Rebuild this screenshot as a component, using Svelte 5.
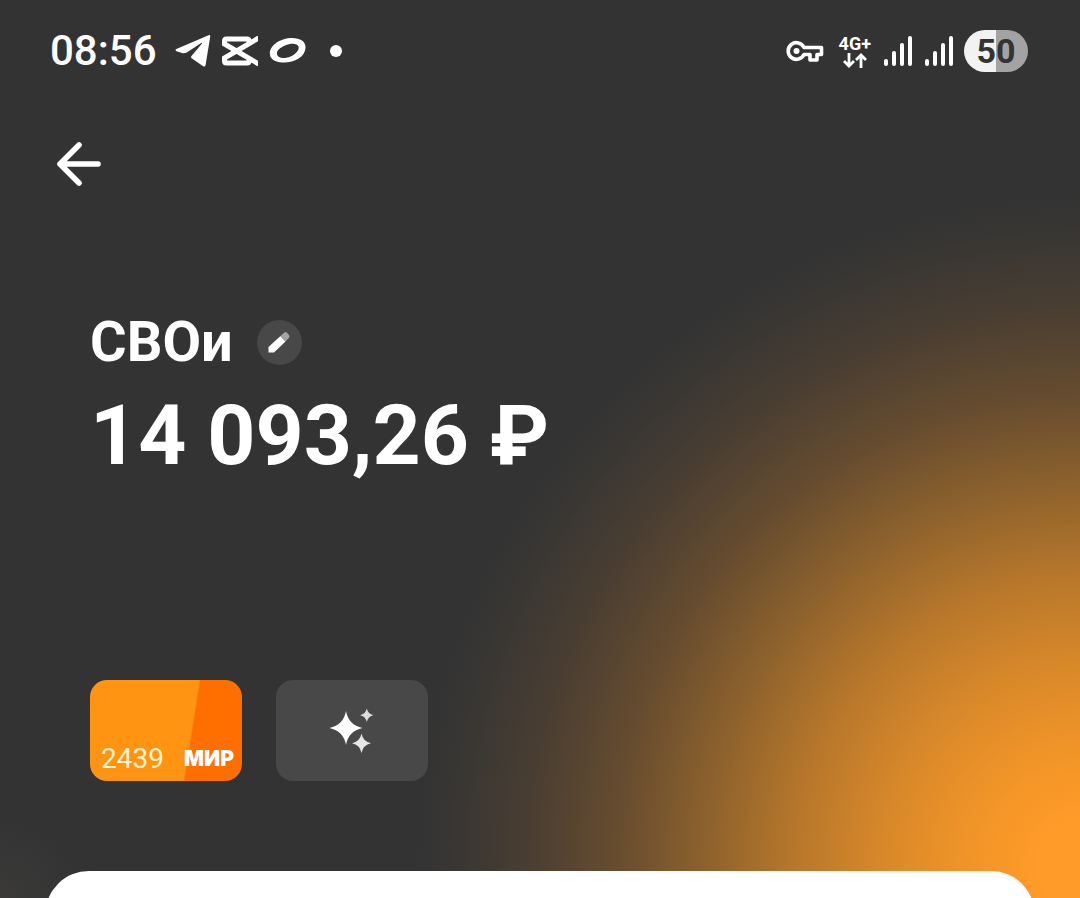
<script>
  const time = '08:56';
  const battery = 50;
  const account = { name: 'СВОи', balance: '14 093,26 ₽' };
  const card = { digits: '2439', system: 'МИР' };
  const signals = [0, 1];
</script>

<div class="screen">
  <header class="status">
    <time>{time}</time>
    <div class="apps">
      <svg width="36" height="34" viewBox="0 0 36 34" aria-hidden="true">
        <path d="M33.500 1.200Q35.600.400 35.200 2.800L30.600 31Q30 33.600 27.800 32L16.600 24.200Q15.500 23.200 16.500 22L27 9.400Q27.300 8.400 26.200 9L11.800 18.500Q8.500 20 5.500 18.600L1.500 17.200Q-.5 16.200 1.400 15Z" fill="#fff" />
      </svg>
      <svg width="36" height="30" viewBox="0 0 36 30" fill="none" stroke="#fff" aria-hidden="true">
        <path d="M27 7V5Q27 3 25 3H4.500Q2.500 3 2.500 5V8L37 28.200M37 1.800L2.500 22V25Q2.500 27 4.500 27H25Q27 27 27 25V23" stroke-width="5" />
      </svg>
      <svg width="38" height="30" viewBox="0 0 38 30" aria-hidden="true">
        <path fill-rule="evenodd" fill="#fff" d="M1 19C-.5 10 11 2 23 2C32 2 37 6 36.500 12C36 21 25 27 13.500 26.500C6 26.200 1.500 23 1 19ZM8 18C8.500 22.500 16 23 21.500 20.500C27 18 30.500 14 29.500 10.500C28.500 7 21.500 7 16 9.500C11 11.800 7.500 14.500 8 18Z" />
      </svg>
      <span class="dot"></span>
    </div>
    <div class="system">
      <svg class="key" width="38" height="22" viewBox="0 0 38 22" fill="none" stroke="#fff" aria-hidden="true">
        <path d="M18 7.500A8.300 8.300 0 1 0 18 14.500H24V20H31V14.500H35.500V7.500Z" stroke-width="3.600" stroke-linejoin="round" />
        <circle cx="10.500" cy="11" r="3" fill="#fff" stroke="none" />
      </svg>
      <div class="network">
        <span>4G+</span>
        <svg width="24" height="15" viewBox="0 0 24 15" fill="none" stroke="#fff" stroke-width="2.800" aria-hidden="true">
          <path d="M6 0V13M1 8L6 13L11 8M18 15V2M13 7L18 2L23 7" />
        </svg>
      </div>
      {#each signals as signal (signal)}
        <svg width="28" height="30" viewBox="0 0 28 30" fill="#fff" aria-hidden="true">
          <rect x="0" y="23" width="4" height="7" rx="2" />
          <rect x="8" y="15" width="4" height="15" rx="2" />
          <rect x="16" y="7" width="4" height="23" rx="2" />
          <rect x="24" y="0" width="4" height="30" rx="2" />
        </svg>
      {/each}
      <div class="battery" style="--level: {battery}%">{battery}</div>
    </div>
  </header>

  <nav>
    <button class="back" aria-label="Назад">
      <svg width="44" height="44" viewBox="0 0 44 44" fill="none" stroke="#fff" stroke-width="5.600" stroke-linecap="round" stroke-linejoin="round" aria-hidden="true">
        <path d="M22 3L3 22L22 41M3 22H41" />
      </svg>
    </button>
  </nav>

  <main>
    <div class="title">
      <h1>{account.name}</h1>
      <button class="edit" aria-label="Изменить название">
        <svg width="24" height="24" viewBox="0 0 24 24" aria-hidden="true">
          <path d="M1.500 22.500V17L13.500 6L18.500 11.500L7 22.500Z" fill="#fff" />
          <path d="M13.500 6L17 2.700Q18.500 1.500 20 2.800L22 5Q23 6.500 22 7.800L18.500 11.500Z" fill="#a3a3a3" />
        </svg>
      </button>
    </div>
    <p class="balance">{account.balance}</p>
    <div class="cards">
      <button class="card bank">
        <span class="digits">{card.digits}</span>
        <span class="mir">{card.system}</span>
      </button>
      <button class="card extra" aria-label="Оформление">
        <svg width="46" height="46" viewBox="0 0 46 46" aria-hidden="true">
          <path d="M17 3Q19.500 17 33.500 20Q19.500 23 17 37Q14.500 23 .5 20Q14.500 17 17 3Z" fill="#fff" />
          <path d="M37.800.500Q39 6 44.500 7.200Q39 8.400 37.800 14Q36.600 8.400 31 7.200Q36.600 6 37.800.500Z" fill="#ddd" />
          <path d="M32.500 25.500Q34 33.500 42 35.200Q34 37 32.500 45Q31 37 23 35.200Q31 33.500 32.500 25.500Z" fill="#e6e6e6" />
        </svg>
      </button>
    </div>
  </main>

  <section class="sheet"></section>
</div>

<style>
  :global(body) {
    margin: 0;
    background: #333;
  }

  .screen {
    height: 100vh;
    display: flex;
    flex-direction: column;
    overflow: hidden;
    color: #fff;
    font-family: Roboto, sans-serif;
    background:
      radial-gradient(circle 670px at calc(100% + 5px) 865px,
        #ff9b28 0%, #ff9b28 7%, #f09428 18%, #d6872a 31%, #b5762b 44%,
        #8c612d 57%, #664c2f 70%, #4a3e32 83%, #3a3733 93%, rgba(51, 51, 51, 0) 100%),
      radial-gradient(circle 80px at 0 898px, #3b3a39, #333),
      #333;
  }

  button {
    margin: 0;
    padding: 0;
    border: 0;
    color: inherit;
    font: inherit;
    cursor: pointer;
  }

  svg {
    display: block;
    flex: none;
  }

  .status {
    display: flex;
    align-items: center;
    flex: none;
    height: 42px;
    padding: 30px 52px 0 50px;
  }

  time {
    font-size: 42px;
    line-height: 42px;
    font-weight: 500;
  }

  .apps {
    display: flex;
    align-items: center;
    gap: 11px;
    margin-left: 18px;
  }

  .dot {
    width: 12px;
    height: 12px;
    margin-left: 12px;
    border-radius: 50%;
    background: #fff;
  }

  .system {
    display: flex;
    align-items: center;
    gap: 13px;
    margin-left: auto;
  }

  .key {
    margin-right: 2px;
  }

  .network {
    display: flex;
    flex-direction: column;
    align-items: center;
    font-size: 18px;
    line-height: 18px;
    font-weight: 700;
  }

  .battery {
    width: 64px;
    height: 42px;
    margin-left: -2px;
    border-radius: 21px;
    background: linear-gradient(90deg, #f2f2f2 var(--level), #a3a3a3 var(--level));
    color: #333;
    font-size: 34px;
    line-height: 42px;
    font-weight: 700;
    text-align: center;
  }

  nav {
    flex: none;
    padding: 70px 57px 0;
  }

  .back {
    display: block;
    background: none;
  }

  main {
    flex: none;
    padding: 126px 90px 90px;
  }

  .title {
    display: flex;
    align-items: center;
    gap: 24px;
  }

  h1 {
    margin: 0;
    font-size: 56px;
    line-height: 60px;
    font-weight: 700;
  }

  .edit {
    display: grid;
    place-items: center;
    width: 45px;
    height: 45px;
    border-radius: 50%;
    background: #484848;
  }

  .balance {
    margin: 14px 0 0;
    font-size: 84px;
    line-height: 100px;
    font-weight: 700;
  }

  .cards {
    display: flex;
    gap: 34px;
    margin-top: 194px;
  }

  .card {
    width: 152px;
    height: 101px;
    border-radius: 17px;
  }

  .bank {
    display: flex;
    align-items: flex-end;
    justify-content: space-between;
    box-sizing: border-box;
    padding: 0 8px 6px 11px;
    background: linear-gradient(99deg, #ff9312 65%, #ff6f00 66%);
  }

  .digits {
    font-size: 28px;
    line-height: 32px;
    color: #fff3d0;
  }

  .mir {
    font: 900 21px/32px Inter, sans-serif;
  }

  .extra {
    display: grid;
    place-items: center;
    background: #484848;
  }

  .sheet {
    flex: 1 0 88px;
    margin: 0 45px;
    border-radius: 44px 44px 0 0;
    background: #fff;
  }
</style>
